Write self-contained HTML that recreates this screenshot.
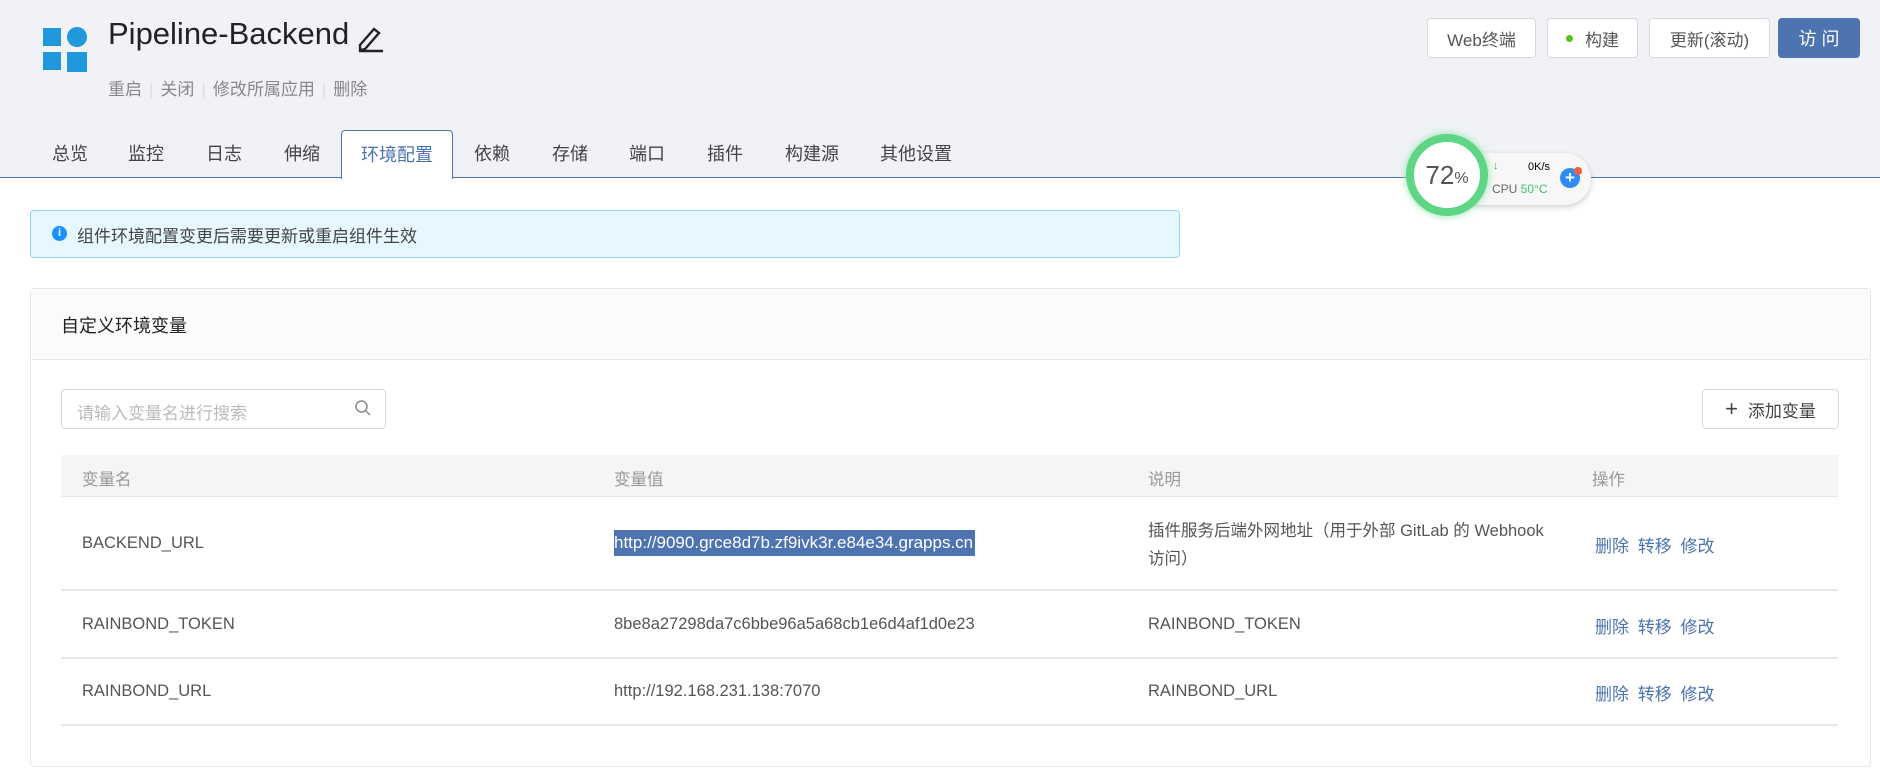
<!DOCTYPE html>
<html><head><meta charset="utf-8"><style>
*{box-sizing:border-box;margin:0;padding:0}
body{width:1880px;height:777px;overflow:hidden;background:#fff;font-family:"Liberation Sans","Noto Sans CJK SC",sans-serif;color:#333;position:relative}
.abs{position:absolute}
.hdr{left:0;top:0;width:1880px;height:178px;background:#f0f2f5;border-bottom:1px solid #4d73b1}
.btn{position:absolute;top:18px;height:40px;border:1px solid #d9d9d9;border-radius:4px;background:#fff;font-size:17px;color:#555;display:flex;align-items:center;justify-content:center}
.tab{position:absolute;top:130px;height:48px;line-height:48px;font-size:18px;color:#444}
.th,.td{position:absolute;font-size:16.5px}
.th{color:#999}
.td{color:#555}
.op{position:absolute;font-size:17px;color:#4d73b1;left:1595px;word-spacing:4px}
.line{position:absolute;left:61px;width:1777px;height:2px;background:#e8e8e8}
.sep{color:#ddd;margin:0 7px}
</style></head><body>
<div class="abs hdr"></div>
<div class="abs" style="left:43px;top:28px;width:18px;height:18px;background:#1f98dc"></div>
<div class="abs" style="left:67px;top:27px;width:20px;height:20px;border-radius:50%;background:#1f98dc"></div>
<div class="abs" style="left:43px;top:52px;width:18px;height:18px;background:#1f98dc"></div>
<div class="abs" style="left:67px;top:52px;width:20px;height:20px;background:#1f98dc"></div>
<div class="abs" style="left:108px;top:16px;font-size:31px;color:#222">Pipeline-Backend</div>
<svg class="abs" style="left:355px;top:23px" width="30" height="30" viewBox="0 0 30 30"><path d="M5 22 L19 6 L24 10 L10 26 L5 27 Z" fill="none" stroke="#222" stroke-width="2.4"/><path d="M4 28 H28" stroke="#222" stroke-width="2.4"/></svg>
<div class="abs" style="left:108px;top:75px;font-size:17px;color:#888">重启<span class="sep">|</span>关闭<span class="sep">|</span>修改所属应用<span class="sep">|</span>删除</div>

<div class="btn" style="left:1427px;width:109px">Web终端</div>
<div class="btn" style="left:1547px;width:91px"><span style="width:7px;height:7px;border-radius:50%;background:#52c41a;margin-right:12px"></span>构建</div>
<div class="btn" style="left:1649px;width:121px">更新(滚动)</div>
<div class="btn" style="left:1778px;width:82px;background:#4d73b1;border-color:#4d73b1;color:#fff;font-size:18px">访 问</div>

<div class="tab" style="left:52px">总览</div>
<div class="tab" style="left:128px">监控</div>
<div class="tab" style="left:206px">日志</div>
<div class="tab" style="left:284px">伸缩</div>
<div class="tab" style="left:341px;width:112px;background:#fff;border:1px solid #4d73b1;border-bottom:none;border-radius:4px 4px 0 0;text-align:center;color:#4d73b1;height:49px">环境配置</div>
<div class="tab" style="left:474px">依赖</div>
<div class="tab" style="left:552px">存储</div>
<div class="tab" style="left:629px">端口</div>
<div class="tab" style="left:707px">插件</div>
<div class="tab" style="left:785px">构建源</div>
<div class="tab" style="left:880px">其他设置</div>

<div class="abs" style="left:1455px;top:153px;width:136px;height:52px;border-radius:26px;background:#f7f7f7;box-shadow:0 2px 6px rgba(0,0,0,.2)"></div>
<div class="abs" style="left:1406px;top:134px;width:82px;height:82px;border-radius:50%;background:#fff;border:8px solid #5fd685;box-shadow:0 0 8px #8de3a6;font-size:26px;color:#555;display:flex;align-items:center;justify-content:center">72<span style="font-size:16px;margin-top:8px">%</span></div>
<div class="abs" style="left:1493px;top:160px;font-size:11px;color:#2aa84a">↓</div>
<div class="abs" style="left:1528px;top:161px;font-size:11px;color:#000">0K/s</div>
<div class="abs" style="left:1492px;top:182px;font-size:12px;color:#666">CPU <span style="color:#3cc66d">50°C</span></div>
<div class="abs" style="left:1560px;top:168px;width:20px;height:20px;border-radius:50%;background:#2f8cf2;color:#fff;font-size:17px;line-height:20px;text-align:center;font-weight:bold">+</div>
<div class="abs" style="left:1574px;top:167px;width:8px;height:8px;border-radius:50%;background:#f25c3c"></div>

<div class="abs" style="left:30px;top:210px;width:1150px;height:48px;background:#e6f7ff;border:1px solid #91d5ff;border-radius:4px"></div>
<div class="abs" style="left:52px;top:226px;width:15px;height:15px;border-radius:50%;background:#1890ff;color:#fff;font-size:11px;line-height:15px;text-align:center;font-weight:bold">i</div>
<div class="abs" style="left:77px;top:222px;font-size:17px;color:#444">组件环境配置变更后需要更新或重启组件生效</div>

<div class="abs" style="left:30px;top:288px;width:1841px;height:479px;border:1px solid #e8e8e8;border-radius:4px;background:#fff"></div>
<div class="abs" style="left:31px;top:289px;width:1839px;height:71px;background:#fafbfd;border-bottom:1px solid #e8e8e8"></div>
<div class="abs" style="left:61px;top:312px;font-size:18px;color:#222">自定义环境变量</div>

<div class="abs" style="left:61px;top:389px;width:325px;height:40px;border:1px solid #d9d9d9;border-radius:4px"></div>
<div class="abs" style="left:77px;top:399px;font-size:17px;color:#bbb">请输入变量名进行搜索</div>
<svg class="abs" style="left:354px;top:399px" width="18" height="18" viewBox="0 0 18 18"><circle cx="7.5" cy="7.5" r="5.5" fill="none" stroke="#888" stroke-width="1.5"/><path d="M11.5 11.5 L16 16" stroke="#888" stroke-width="1.5"/></svg>

<div class="abs" style="left:1702px;top:389px;width:137px;height:40px;border:1px solid #d9d9d9;border-radius:4px;font-size:17px;color:#444;display:flex;align-items:center;justify-content:center"><span style="font-size:22px;margin-right:10px;font-weight:300">+</span>添加变量</div>

<div class="abs" style="left:61px;top:455px;width:1777px;height:42px;background:#f4f5f7;border-bottom:1px solid #e8e8e8"></div>
<div class="th" style="left:82px;top:466px">变量名</div>
<div class="th" style="left:614px;top:466px">变量值</div>
<div class="th" style="left:1148px;top:466px">说明</div>
<div class="th" style="left:1592px;top:466px">操作</div>

<div class="td" style="left:82px;top:534px">BACKEND_URL</div>
<div class="td" style="left:614px;top:530px;height:26px;line-height:26px;background:#4d73b1;color:#fff;font-size:17px;padding-right:2px">http://9090.grce8d7b.zf9ivk3r.e84e34.grapps.cn</div>
<div class="td" style="left:1148px;top:517px;width:410px;line-height:28px;word-break:break-all">插件服务后端外网地址（用于外部 GitLab 的 Webhook 访问）</div>
<div class="op" style="top:532px">删除 转移 修改</div>
<div class="line" style="top:589px"></div>

<div class="td" style="left:82px;top:615px">RAINBOND_TOKEN</div>
<div class="td" style="left:614px;top:615px">8be8a27298da7c6bbe96a5a68cb1e6d4af1d0e23</div>
<div class="td" style="left:1148px;top:615px">RAINBOND_TOKEN</div>
<div class="op" style="top:613px">删除 转移 修改</div>
<div class="line" style="top:657px"></div>

<div class="td" style="left:82px;top:682px">RAINBOND_URL</div>
<div class="td" style="left:614px;top:682px">http://192.168.231.138:7070</div>
<div class="td" style="left:1148px;top:682px">RAINBOND_URL</div>
<div class="op" style="top:680px">删除 转移 修改</div>
<div class="line" style="top:724px"></div>
</body></html>
